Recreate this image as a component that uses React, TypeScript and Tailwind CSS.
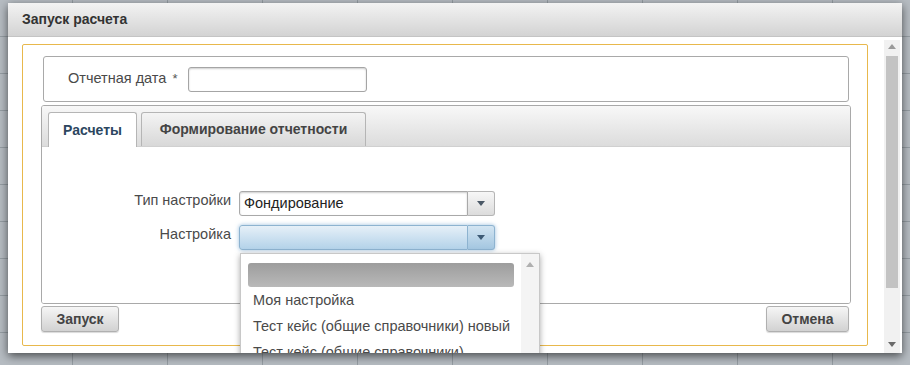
import React from 'react';

const Caret: React.FC<{ className?: string; up?: boolean }> = ({ className = '', up = false }) => (
  <svg width="8" height="5" viewBox="0 0 8 5" className={className}>
    {up ? <path d="M0 5 L4 0 L8 5 Z" fill="currentColor" /> : <path d="M0 0 L8 0 L4 5 Z" fill="currentColor" />}
  </svg>
);

const Combo: React.FC<{ value?: string; focused?: boolean }> = ({ value = '', focused = false }) => (
  <div className={`flex h-[25px] w-[256px] rounded-[3px] ${focused ? 'shadow-[0_0_4px_rgba(90,150,200,0.6)]' : ''}`}>
    <div
      className={`flex-1 flex items-center px-[4px] rounded-l-[3px] border text-[14.5px] text-[#222] ${
        focused
          ? 'border-[#8db3d0] bg-gradient-to-b from-[#e6f0f8] to-[#b3d2e9]'
          : 'border-[#a9a9a9] bg-white shadow-[inset_0_1px_2px_rgba(0,0,0,0.2)]'
      }`}
    >
      {value}
    </div>
    <div
      className={`w-[27px] flex items-center justify-center rounded-r-[3px] border border-l-0 ${
        focused
          ? 'border-[#8db3d0] bg-gradient-to-b from-[#d3e5f2] to-[#a3c6e0] text-[#3d5a75]'
          : 'border-[#b5b5b5] bg-gradient-to-b from-[#f7f7f7] to-[#dcdcdc] text-[#4a5866]'
      }`}
    >
      <Caret />
    </div>
  </div>
);

const Button: React.FC<{ label: string; width: string }> = ({ label, width }) => (
  <button
    className={`${width} h-[26px] rounded-[3px] border border-[#b0b0b0] bg-gradient-to-b from-[#f6f6f6] to-[#d2d2d2] text-[14px] font-bold text-[#444] shadow-[0_1px_1px_rgba(0,0,0,0.15)]`}
  >
    {label}
  </button>
);

export default function App() {
  const options: string[] = [
    'Моя настройка',
    'Тест кейс (общие справочники) новый',
    'Тест кейс (общие справочники)',
  ];
  const bgCells = Array.from({ length: 10 * 10 });

  return (
    <div className="relative w-[910px] h-[365px] overflow-hidden bg-[#b1b8be] font-['Liberation_Sans',Arial,sans-serif]">
      {/* page behind the dialog */}
      <div className="grid grid-cols-[repeat(10,95px)] grid-rows-[repeat(10,37px)] -ml-[22px]">
        {bgCells.map((_, i) => (
          <div key={i} className="border-r border-b border-[#959da3] bg-[#b6bcc2]" />
        ))}
      </div>

      {/* dialog */}
      <div className="absolute left-[8px] top-[3px] w-[894px] h-[350px] overflow-hidden bg-white shadow-[0_3px_9px_rgba(0,0,0,0.6)] flex flex-col">
        <div className="h-[34px] shrink-0 flex items-center px-[14px] bg-gradient-to-b from-[#f3f3f3] to-[#d3d3d3] border-b border-[#c4c4c4]">
          <span className="text-[14px] font-bold text-[#333]">Запуск расчета</span>
        </div>

        <div className="flex-1 flex">
          <div className="flex-1 pl-[14px] pt-[7px]">
            <div className="w-[846px] h-[302px] rounded-[2px] border border-[#e8b84c] px-[18px] pt-[11px]">
              {/* date fieldset */}
              <div className="ml-[2px] w-[806px] h-[46px] rounded-[3px] border border-[#a9a9a9] flex items-center pl-[24px]">
                <span className="text-[14.5px] text-[#4a4a4a]">Отчетная дата</span>
                <span className="text-[13px] text-[#555] ml-[6px]">*</span>
                <div className="ml-[11px] w-[179px] h-[25px] rounded-[3px] border border-[#a5a5a5] bg-white shadow-[inset_0_1px_2px_rgba(0,0,0,0.2)]" />
              </div>

              {/* tab panel */}
              <div className="mt-[3px] w-[810px] h-[199px] rounded-[3px] border border-[#a9a9a9] overflow-hidden flex flex-col">
                <div className="h-[41px] shrink-0 flex items-end gap-[4px] pl-[6px] bg-gradient-to-b from-[#f8f8f8] to-[#dcdcdc] border-b border-[#d0d0d0]">
                  <div className="w-[89px] h-[35px] -mb-px rounded-t-[3px] border border-b-0 border-[#b5b5b5] bg-white flex items-center justify-center text-[14px] font-bold text-[#2c4660]">
                    Расчеты
                  </div>
                  <div className="w-[225px] h-[34px] rounded-t-[3px] border border-b-0 border-[#b5b5b5] bg-gradient-to-b from-[#f4f4f4] to-[#d8d8d8] flex items-center justify-center text-[14px] font-bold text-[#444]">
                    Формирование отчетности
                  </div>
                </div>
                <div className="flex-1 bg-white pt-[44px] flex flex-col gap-[9px]">
                  <div className="flex items-center">
                    <span className="w-[197px] text-right text-[14.5px] text-[#4a4a4a] pr-[8px] -mt-[6px]">Тип настройки</span>
                    <Combo value="Фондирование" />
                  </div>
                  <div className="flex items-center">
                    <span className="w-[197px] text-right text-[14.5px] text-[#4a4a4a] pr-[8px] -mt-[6px]">Настройка</span>
                    <Combo focused />
                  </div>
                </div>
              </div>

              <div className="mt-[2px] w-[808px] flex justify-between">
                <Button label="Запуск" width="w-[78px]" />
                <Button label="Отмена" width="w-[83px]" />
              </div>
            </div>
          </div>

          {/* dialog scrollbar */}
          <div className="w-[16px] mr-[2px] mt-[3px] bg-[#f1f1f1] flex flex-col items-center">
            <Caret up className="mt-[4px] text-[#9a9a9a]" />
            <div className="mt-[7px] w-[12px] h-[232px] bg-[#c3c3c3]" />
            <div className="flex-1" />
            <Caret className="mb-[6px] text-[#6a6a6a]" />
          </div>
        </div>

        {/* dropdown list */}
        <div className="absolute left-[232px] top-[250px] w-[300px] h-[110px] bg-white border border-[#c8c8c8] shadow-[0_2px_6px_rgba(0,0,0,0.35)] flex">
          <div className="flex-1 pl-[7px] pt-[9px]">
            <div className="w-[266px] h-[24px] rounded-[3px] bg-gradient-to-b from-[#9d9d9d] to-[#b9b9b9]" />
            <div className="flex flex-col pl-[5px] text-[14.5px] text-[#4a4a4a]">
              {options.map((o) => (
                <div key={o} className="h-[26px] flex items-center leading-none">
                  {o}
                </div>
              ))}
            </div>
          </div>
          <div className="w-[18px] bg-[#f4f4f4] flex justify-center">
            <Caret up className="mt-[8px] text-[#b0b0b0]" />
          </div>
        </div>
      </div>
    </div>
  );
}
